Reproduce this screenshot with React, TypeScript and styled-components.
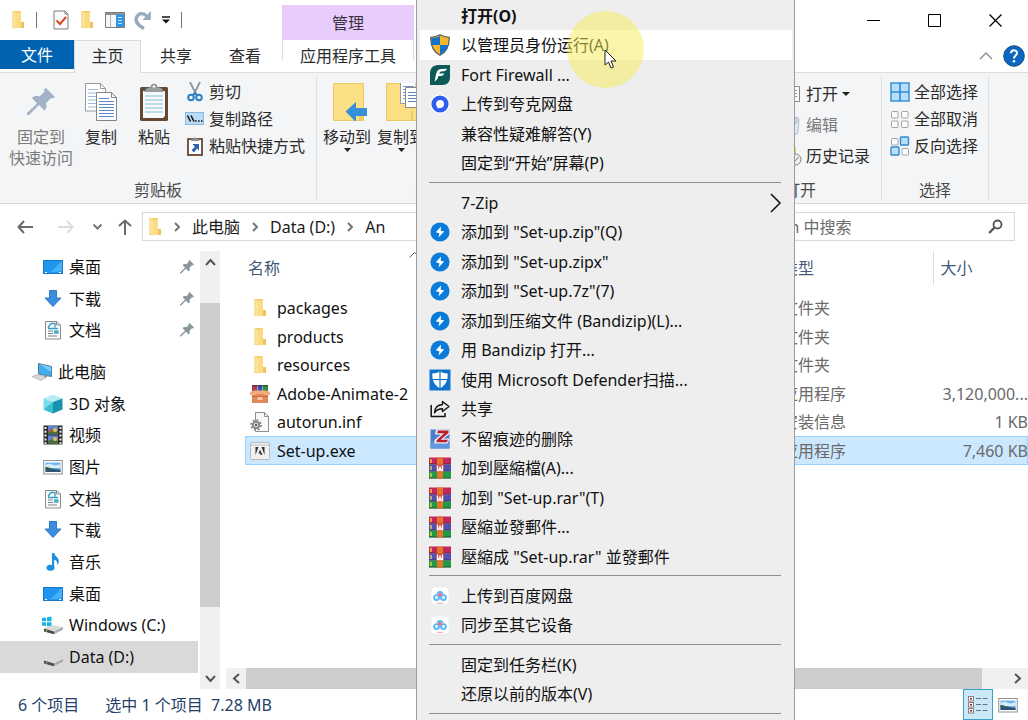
import React from "react";
import styled, { createGlobalStyle, css } from "styled-components";

const GlobalStyle = createGlobalStyle`
  *, *::before, *::after { box-sizing: border-box; }
  body { margin: 0; background: #fff; }
  body, button, input, table {
    font-family: "Noto Sans", "Noto Sans CJK SC", sans-serif;
    font-size: 16px;
    line-height: 20px;
  }
  button { border: 0; padding: 0; margin: 0; background: none; color: inherit; cursor: default; white-space: nowrap; }
  a { color: inherit; text-decoration: none; cursor: default; white-space: nowrap; }
  svg { display: block; flex: none; }
  ul { list-style: none; margin: 0; padding: 0; }
`;

/* ---------- icons ---------- */

const Folder = () => (
  <svg width="14" height="20" viewBox="0 0 14 20">
    <path d="M1 1h9v17H1z" fill="#f6cf6c" />
    <path d="M1 1l4 2v16l-4-2z" fill="#fbe29a" />
    <path d="M5 3h4l1-2v11h3v6H5z" fill="#fbdc84" />
    <path d="M10 12h3v6h-3z" fill="#efc35a" />
  </svg>
);

const CheckDoc = () => (
  <svg width="16" height="20" viewBox="0 0 16 20">
    <path d="M1 1h11l3 3v15H1z" fill="#fafafa" stroke="#7d7d7d" />
    <path d="M12 1v3h3" fill="none" stroke="#7d7d7d" />
    <path d="M3.500 10.500l3.500 3.500 6-7" fill="none" stroke="#d9481c" strokeWidth="2" />
  </svg>
);

const PaneWindow = () => (
  <svg width="20" height="16" viewBox="0 0 20 16">
    <path d="M.5.5h19v15H.5z" fill="#f6f6f6" stroke="#7c7c7c" />
    <path d="M1 1h18v2H1z" fill="#8d9298" />
    <path d="M5.500 3v12" stroke="#b5b5b5" />
    <path d="M11 2.500h8V15h-8z" fill="#2f96e6" />
    <path d="M13 5.500h4M13 8.500h4M13 11.500h4" stroke="#bfe2ff" />
  </svg>
);

const Redo = () => (
  <svg width="17" height="20" viewBox="0 0 17 20">
    <path d="M10 18.500C3 15 .5 10.500 3 6.500 5 3 9.500 2.500 12.500 6" fill="none" stroke="#9aa8bf" strokeWidth="3.400" />
    <path d="M16.800 1v9H8.500z" fill="#9aa8bf" />
  </svg>
);

const QuickDrop = () => (
  <svg width="8" height="8" viewBox="0 0 8 8">
    <path d="M0 1h8" stroke="#111" strokeWidth="1.500" />
    <path d="M0 3.500h8l-4 4z" fill="#111" />
  </svg>
);

const PinBig = () => (
  <svg width="28" height="28" viewBox="0 0 28 28">
    <path d="M19 0l9 9-2 1.500-2-.5-5 5c1 3 .5 5.500-1.500 7.500l-5.500-5.500L2 27H0v-2l10-9.500L5 10c2-2 4.500-2.500 7.500-1.500l5-5-.5-2z" fill="#a3b1c6" />
  </svg>
);

const CopyBig = () => (
  <svg width="32" height="38" viewBox="0 0 32 38">
    <path d="M.5.500h15l5 5V28H.5z" fill="#fdfdfd" stroke="#9a9a9a" />
    <path d="M15.500.5v5h5" fill="none" stroke="#9a9a9a" />
    <path d="M3 6.500h10M3 10h15M3 13.500h15M3 17h15M3 20.500h15M3 24h15" stroke="#9dbce0" />
    <path d="M11.500 9.500h15l5 5v23h-20z" fill="#fff" stroke="#848484" />
    <path d="M26.500 9.500v5h5" fill="none" stroke="#848484" />
    <path d="M14 15.500h10M14 18.500h15M14 21.500h15M14 24.500h15M14 27.500h15M14 30.500h15M14 33.500h15" stroke="#5b87c5" strokeWidth="1.200" />
  </svg>
);

const PasteBig = () => (
  <svg width="28" height="38" viewBox="0 0 28 38">
    <rect x="0" y="4" width="28" height="34" rx="1.500" fill="#664731" />
    <path d="M3 8h22v25l-2 2H3z" fill="#f6fafc" />
    <path d="M5 13h18M5 17h18M5 21h18M5 25h18M5 29h18" stroke="#a9cfe2" strokeWidth="1.500" />
    <path d="M5 8.500l1-3 5-1.500a3 3 0 0 1 6 0l5 1.500 1 3z" fill="#9a9fa3" stroke="#74797c" strokeWidth=".6" />
    <circle cx="14" cy="3.500" r="1.300" fill="#fff" />
  </svg>
);

const Scissors = () => (
  <svg width="16" height="20" viewBox="0 0 16 20">
    <path d="M3 0l6.500 13M13 0L6.500 13" stroke="#8c949c" strokeWidth="1.800" />
    <circle cx="4" cy="15.500" r="2.800" fill="none" stroke="#2b82c4" strokeWidth="2" />
    <circle cx="12" cy="15.500" r="2.800" fill="none" stroke="#2b82c4" strokeWidth="2" />
    <path d="M6 13l2-2 2 2" fill="none" stroke="#2b82c4" strokeWidth="2" />
  </svg>
);

const PathIcon = () => (
  <svg width="20" height="14" viewBox="0 0 20 14">
    <rect x=".5" y=".5" width="18" height="12" fill="#b9dcf4" stroke="#8db9d8" />
    <path d="M2.500 3.500l3 6M6 3.500l3 6" stroke="#111" strokeWidth="1.500" />
    <path d="M10 9h1.500M13 9h1.500M16 9h1.500" stroke="#111" strokeWidth="1.500" />
  </svg>
);

const PasteLink = () => (
  <svg width="16" height="20" viewBox="0 0 16 20">
    <rect x="1" y="3" width="14" height="16" fill="#fff" stroke="#664731" strokeWidth="1.800" />
    <path d="M4 5V3l2.500-.5a1.600 1.600 0 0 1 3 0L12 3v2z" fill="#8c9094" />
    <path d="M5.500 8H12v6.500l-2-2-3 4-2.500-2.500 3.500-3z" fill="#2c62ad" />
  </svg>
);

const MoveTo = () => (
  <svg width="40" height="38" viewBox="-6 0 40 38">
    <path d="M.5.500h30v37H.5z" fill="#fbdf85" stroke="#ecc862" />
    <path d="M26 30h4v7h-4z" fill="#f3ca5e" />
    <path d="M12.500 28.500L23 19v6h11v8H23v6z" fill="#3690d8" />
  </svg>
);

const CopyTo = () => (
  <svg width="40" height="38" viewBox="-5 0 40 38">
    <path d="M.5.500h30v37H.5z" fill="#fbdf85" stroke="#ecc862" />
    <path d="M26 28v9" stroke="#e3b84c" />
    <path d="M14.500-1.500H30v22H14.500z" fill="#fff" stroke="#999" />
    <path d="M17 3.500h11M17 6.500h11M17 9.500h11M17 12.500h11M17 15.500h11" stroke="#6d97cf" />
    <path d="M19.500 4.500H35v20H19.500z" fill="#fff" stroke="#888" />
    <path d="M22 9.500h12M22 12.500h12M22 15.500h12M22 18.500h12" stroke="#5b87c5" />
  </svg>
);

const DropArrow = ({ size = 7 }: { size?: number }) => (
  <svg width={size} height="4" viewBox="0 0 8 4" preserveAspectRatio="none">
    <path d="M0 0h8L4 4z" fill="#222" />
  </svg>
);

const PropsIcon = () => (
  <svg width="20" height="18" viewBox="0 0 20 18">
    <path d="M3.500 1.500h14v15h-14z" fill="#fafafa" stroke="#8a8a8a" />
    <path d="M6 5.500h9M6 8.500h9M6 11.500h9" stroke="#8a97a8" />
  </svg>
);

const EditIcon = () => (
  <svg width="20" height="20" viewBox="0 0 20 20">
    <path d="M4 6h13l-1.500 13H5z" fill="#e4eaf3" stroke="#b4c0d3" />
    <path d="M9 5l6-3 2 3-4 4z" fill="#ccd6e5" stroke="#a9b7cc" />
  </svg>
);

const HistoryIcon = () => (
  <svg width="20" height="20" viewBox="0 0 20 20">
    <path d="M1 1h13v16H1z" fill="#f2cd57" />
    <circle cx="13.500" cy="13.500" r="5.500" fill="#eee" stroke="#7d7d7d" />
    <path d="M10.500 13l2.500 2 3.500-4" fill="none" stroke="#777" />
  </svg>
);

const Cell = ({ x, y, on }: { x: number; y: number; on?: boolean }) => (
  <rect x={x} y={y} width={on ? 8 : 6.500} height={on ? 8 : 6.500} rx=".8" fill={on ? "#b8e0fb" : "#fbfbfb"} stroke={on ? "#2d8ad2" : "#a4a4a4"} strokeWidth={on ? 1.400 : 1} />
);
const SelectAllIcon = () => (
  <svg width="20" height="20" viewBox="0 0 20 20">
    <rect x="1" y="1" width="18" height="18" fill="#b8e0fb" stroke="#2d8ad2" strokeWidth="1.400" />
    <path d="M10 1v18M1 10h18" stroke="#2d8ad2" strokeWidth="1.600" />
  </svg>
);
const SelectNoneIcon = () => (
  <svg width="20" height="20" viewBox="0 0 20 20">
    <Cell x={1.500} y={2.500} /><Cell x={11.500} y={2.500} /><Cell x={1.500} y={12} /><Cell x={11.500} y={12} />
  </svg>
);
const InvertIcon = () => (
  <svg width="20" height="20" viewBox="0 0 20 20">
    <Cell x={1.500} y={2.500} /><Cell x={10.500} y={1} on /><Cell x={1} y={11} on /><Cell x={12} y={12.500} />
  </svg>
);

type StrokeProps = { w: number; h: number; d: string; color?: string; weight?: number };
const Stroke = ({ w, h, d, color = "#555", weight = 2 }: StrokeProps) => (
  <svg width={w} height={h} viewBox={`0 0 ${w} ${h}`}>
    <path d={d} fill="none" stroke={color} strokeWidth={weight} />
  </svg>
);

const Help = () => (
  <svg width="22" height="22" viewBox="0 0 22 22">
    <circle cx="11" cy="11" r="10.300" fill="#0b66c0" stroke="#1f4f86" />
    <path d="M8 8.200c.2-4 6.500-3.600 6 .2-.3 2-3 2.300-3 5" fill="none" stroke="#fff" strokeWidth="2" />
    <circle cx="11" cy="16.200" r="1.300" fill="#fff" />
  </svg>
);

const SearchGlyph = () => (
  <svg width="16" height="16" viewBox="0 0 16 16">
    <circle cx="9.500" cy="5.500" r="4" fill="none" stroke="#555" strokeWidth="1.800" />
    <path d="M6.500 8.500L1.200 14" stroke="#555" strokeWidth="2.400" />
  </svg>
);

const PinSmall = () => (
  <svg width="14" height="14" viewBox="0 0 28 28">
    <path d="M19 0l9 9-2 2-2-.5-5 5c1 3 .5 5.500-1.500 7.500l-5.500-5.500L2 27H0v-2l10-9.500L5 10c2-2 4.500-2.500 7.500-1.500l5-5-.5-2z" fill="#8b979f" />
  </svg>
);

const Desktop = () => (
  <svg width="20" height="20" viewBox="0 0 20 20">
    <rect x=".5" y="3.500" width="19" height="13" fill="#1f96ee" stroke="#1779c8" />
    <path d="M19 4v10L7 15.500z" fill="#45b0f7" />
    <path d="M2 15.500h2M16 15.500h2" stroke="#fff" />
  </svg>
);
const Download = () => (
  <svg width="20" height="20" viewBox="0 0 20 20">
    <path d="M6.500 1.500h7V9H18l-8 8.500L2 9h4.500z" fill="#3a8ee0" stroke="#2e78c4" />
  </svg>
);
const DocIcon = () => (
  <svg width="20" height="20" viewBox="0 0 20 20">
    <path d="M2.500 1.500h11l4 3.500v14h-15z" fill="#fcfcfc" stroke="#8b8b8b" />
    <path d="M13.500 1.500V5h4" fill="none" stroke="#8b8b8b" />
    <path d="M5 7.500l3-4 4 0v4M5 8.500h10" stroke="#2f9fc4" strokeWidth="1.300" fill="none" />
    <path d="M5 11h5M5 13.500h5M5 16h9M11.500 11h4M11.500 13h4" stroke="#70818d" />
    <path d="M11 10.500h4.500v3H11z" fill="#4aaed0" />
  </svg>
);
const ThisPC = () => (
  <svg width="22" height="20" viewBox="0 0 22 20">
    <path d="M7.500 1.500l13 3v10l-13-2.500z" fill="#41acec" stroke="#4f7d9c" />
    <path d="M8 2l12 8V5z" fill="#7dcaf6" />
    <path d="M1 14.500l6-2 9 2.500-6 3.500z" fill="#d5d9dc" stroke="#a9aeb2" strokeWidth=".7" />
    <path d="M13 13l3 .5v2l-3-1z" fill="#8c959c" />
  </svg>
);
const Cube = () => (
  <svg width="20" height="20" viewBox="0 0 20 20">
    <path d="M10 .5l9.500 4L10 8 .5 4.500z" fill="#b6edf3" />
    <path d="M.5 4.500L10 8v11.500l-9.500-4z" fill="#7cdbe6" />
    <path d="M19.500 4.500L10 8v11.500l9.500-4z" fill="#1793ae" />
    <path d="M.5 15.500L10 8v11.500z" fill="#3dbdd0" />
  </svg>
);
const Film = () => (
  <svg width="20" height="20" viewBox="0 0 20 20">
    <path d="M.5.500h19v19H.5z" fill="#2b2b2b" />
    <path d="M5 1h10v8.500H5zM5 10.500h10V19H5z" fill="#5f82d0" />
    <path d="M5 6l4-2 2 3 4-1v3.500H5zM5 16l5-2 5 2v3H5z" fill="#4a6b3c" />
    <circle cx="12" cy="5" r="2" fill="#e7c140" /><circle cx="7.500" cy="5.500" r="1.500" fill="#cf4d63" /><circle cx="12" cy="14" r="2" fill="#e7c140" />
    <path d="M2.500 2v17M17.500 2v17" stroke="#f2f2f2" strokeWidth="2" strokeDasharray="2 1.800" />
  </svg>
);
const Picture = () => (
  <svg width="20" height="20" viewBox="0 0 20 20">
    <rect x=".75" y="3.500" width="18.500" height="13.500" fill="#fff" stroke="#909090" />
    <path d="M2.500 5.500h15V15h-15z" fill="#6fb6ea" />
    <path d="M2.500 8c4-2.500 6-1 8 0s5 0 7-1v4h-15z" fill="#d6ecf8" />
    <path d="M2.500 10.500c5 0 8 2 15 2V15h-15z" fill="#31557a" />
    <path d="M2.500 10c3 0 5 1.500 8 2.500h-8z" fill="#2f6446" />
  </svg>
);
const Music = () => (
  <svg width="20" height="20" viewBox="0 0 20 20">
    <ellipse cx="7.500" cy="15.800" rx="4" ry="3" fill="#1d8fe0" />
    <path d="M9 1h2.200c.3 3 4.800 4.500 4.600 8.500 0 1.500-.8 2.500-1.600 3.500.5-3.500-1-4.500-3-5.200V16H9z" fill="#1d8fe0" />
  </svg>
);
const Drive = ({ win }: { win?: boolean }) => (
  <svg width="22" height="20" viewBox="0 0 22 20">
    {win && <path d="M0 3l4-.6v3.900H0zM5 2.200l4.500-.7v4.800H5zM0 7.200h4V11l-4-.6zM5 7.200h4.500v4.500L5 11z" fill="#16b3e8" />}
    <path d="M2 13.500l8-3.500 11 2-9 4.500z" fill="#dadada" />
    <path d="M2 13.500l10 3v2.800L2 16.500z" fill="#4a4d4c" />
    <path d="M12 16.500l9-4.500v2.500l-9 4.800z" fill="#a7a9aa" />
    <circle cx="4.500" cy="15.700" r=".8" fill="#8de05e" />
  </svg>
);

const WinRarBox = () => (
  <svg width="20" height="20" viewBox="0 0 20 20">
    <path d="M2 1h5v8H2z" fill="#b33652" /><path d="M7.500 1h5v8h-5z" fill="#3552b5" /><path d="M13 1h5v8h-5z" fill="#2f8f45" />
    <path d="M2 1h16v1.500H2z" fill="#222" opacity=".45" />
    <path d="M2 8h16v11H2z" fill="#e08a5b" />
    <path d="M0 8l4-1.500h12L20 8v3h-5l-2-1H7l-2 1H0z" fill="#f3ad7c" />
    <path d="M2 12h16v1H2z" fill="#c96d40" />
    <path d="M7.500 13h5v3h-5z" fill="#f6c9a4" />
  </svg>
);
const InfFile = () => (
  <svg width="20" height="20" viewBox="0 0 20 20">
    <path d="M5.500.500h9l4 4v15h-13z" fill="#f8f8f8" stroke="#8e8e8e" />
    <path d="M14.500.5v4h4" fill="none" stroke="#8e8e8e" />
    <circle cx="6" cy="13" r="3.200" fill="#dfe3e5" stroke="#7b858b" strokeWidth="1.800" />
    <circle cx="6" cy="13" r="5" fill="none" stroke="#7b858b" strokeWidth="1.600" strokeDasharray="2 1.900" />
    <circle cx="6" cy="13" r="1.200" fill="#555" />
  </svg>
);
const AdobeFile = () => (
  <svg width="20" height="18" viewBox="0 0 20 18">
    <rect x=".5" y=".5" width="19" height="17" rx="1.500" fill="#f1f1f1" stroke="#b9b9b9" />
    <path d="M1 2h18v2H1z" fill="#d9d9d9" />
    <path d="M5.500 5h3L5.500 13zM11.500 5h3v8z" fill="#333" />
    <path d="M10 7.500l2.500 5.500h-1.700l-.7-1.600H8.500z" fill="#333" />
  </svg>
);

const Shield = () => (
  <svg width="20" height="22" viewBox="0 0 20 22">
    <path d="M10 .8c3 1.700 6 2.400 9.200 2.500.3 8-2 14.500-9.200 18C2.800 17.800.5 11.300.8 3.300 4 3.200 7 2.500 10 .8z" fill="#f7b62d" stroke="#4f5b66" strokeWidth="1.200" />
    <path d="M10 2v9H1.800c-.5-2.400-.5-4.500-.4-7C4.600 4 7.300 3.400 10 2z" fill="#1473c8" />
    <path d="M10 11h8.200c-1.100 4.200-3.700 7.300-8.200 9.600z" fill="#1473c8" />
  </svg>
);
const Fort = () => (
  <svg width="22" height="22" viewBox="0 0 22 22">
    <path d="M9 1h12v12.500c0 4.500-3 7.500-7.500 7.500H1V9.500C1 4.500 4 1 9 1z" fill="#0c5a58" />
    <path d="M18 4.800c-1 2-2.500 2.500-4.500 2.500-2 0-2.800.7-3.300 2.200h5c-.8 1.800-2 2.500-3.700 2.500H9.500c-.5 2.500-1.800 4.500-4 5.500 1-3 .8-5 1.700-8 .9-3.200 2.600-4.500 5.600-4.500z" fill="#fff" />
  </svg>
);
const Quark = () => (
  <svg width="20" height="20" viewBox="0 0 20 20">
    <circle cx="10" cy="10" r="9.700" fill="#fff" />
    <circle cx="10" cy="10" r="8.600" fill="#2c5ff0" />
    <path d="M10 6a4 4 0 1 1 0 8c-1 0-1.500.5-2.500.3.300-.7-.2-1-.7-1.800A4 4 0 0 1 10 6z" fill="#fff" />
  </svg>
);
const Bandizip = () => (
  <svg width="20" height="20" viewBox="0 0 20 20">
    <circle cx="10" cy="10" r="9.600" fill="#0a7bd9" />
    <path d="M11 4.500L5.800 10.200l3.600 1L8.500 15.500l5.700-5.900-3.500-.9z" fill="#fff" />
  </svg>
);
const Defender = () => (
  <svg width="22" height="22" viewBox="0 0 22 22">
    <path d="M.5.500h21v21H.5z" fill="#0f72cb" />
    <path d="M11 2.500c2.300 1.300 4.800 1.800 7.700 1.900.3 6.300-1.700 11.700-7.700 14.800-6-3.100-8-8.500-7.700-14.800 2.900-.1 5.400-.6 7.700-1.900z" fill="#fff" />
    <path d="M11 2v18M3 10.500h16" stroke="#0f72cb" strokeWidth="1.200" />
  </svg>
);
const Share = () => (
  <svg width="20" height="20" viewBox="0 0 20 20">
    <path d="M1.200 6v11.500H15V14" fill="none" stroke="#111" strokeWidth="1.500" />
    <path d="M12.500 2.500L19 7.500l-6.500 5V9.800c-4 0-6 1.200-8 4 .3-4.500 3-8 8-8.300z" fill="none" stroke="#111" strokeWidth="1.400" strokeLinejoin="round" />
  </svg>
);
const ZDelete = () => (
  <svg width="20" height="20" viewBox="0 0 20 20">
    <path d="M.5.500h19v19H.5z" fill="#4a80cb" />
    <path d="M.5 14l8-5 11 5v5.500H.5z" fill="#5f98dd" />
    <path d="M6 .5h13.500v4.500L13.500 9.500h6L17.500 14.500H4.500v-3.500L11 5.500H5z" fill="#f3ecef" />
    <path d="M8 1.500h10.500v2.500L10.500 10.800h7.500l-1.200 2.400H6.500v-1.700L14 4.300H7z" fill="#b5202f" />
  </svg>
);
const WinRar = () => (
  <svg width="22" height="22" viewBox="0 0 22 22">
    <path d="M0 .5h22v7H0z" fill="#c4285a" /><path d="M0 7.500h22v7H0z" fill="#5350b0" /><path d="M0 14.500h22v7H0z" fill="#1f9a45" />
    <path d="M0 7h22M0 14h22M0 21h22" stroke="#2c1630" strokeWidth=".9" opacity=".6" />
    <path d="M2 2v4M2 9v4M2 16v4" stroke="#f3d242" strokeWidth="1.400" />
    <path d="M8 .5h6v21H8z" fill="#e5742a" />
    <path d="M7.500 7.500h7v7h-7z" fill="#d4402f" />
    <path d="M8.500 8.500v5h1.500l1-3 1 3h1.500v-5" fill="none" stroke="#fff" strokeWidth="1.400" />
  </svg>
);
const Baidu = () => (
  <svg width="18" height="18" viewBox="0 0 18 18">
    <rect x=".5" y=".5" width="17" height="17" rx="3" fill="#fff" />
    <circle cx="5.600" cy="10.600" r="2.600" fill="#d9f1ff" stroke="#52b4f3" strokeWidth="1.700" />
    <circle cx="12.400" cy="10.600" r="2.600" fill="#d9f1ff" stroke="#52b4f3" strokeWidth="1.700" />
    <path d="M6.200 7a2.900 2.900 0 0 1 5.600 0" fill="none" stroke="#52b4f3" strokeWidth="1.700" />
    <path d="M7.200 9L9 6.800 10.800 9" fill="none" stroke="#ee5a6b" strokeWidth="1.700" />
    <path d="M6 16.300h6" stroke="#f3a3ad" />
  </svg>
);
const DetailsView = () => (
  <svg width="20" height="18" viewBox="0 0 20 18">
    {[0.5, 6.500, 12.500].map((y) => (
      <g key={y}>
        <rect x=".5" y={y} width="5" height="4.500" fill="#fff" stroke="#8c7e7e" />
        <circle cx="3" cy={y + 2.300} r="1" fill="#6b1d1d" />
        <path d={`M8 ${y + 2}h5M14.500 ${y + 2}h5`} stroke="#5d7784" strokeWidth="1.200" />
      </g>
    ))}
  </svg>
);

/* ---------- window frame ---------- */

const Window = styled.div`
  position: relative;
  display: flex;
  flex-direction: column;
  height: 100vh;
  min-height: 640px;
  overflow: hidden;
  background: #fff;
  color: #1a1a1a;
`;
const TitleBar = styled.header`
  display: flex;
  align-items: center;
  height: 40px;
  flex: none;
`;
const QuickAccess = styled.div`
  display: flex;
  align-items: center;
  width: 282px;
  padding-left: 11px;
  gap: 11px;
  button { display: flex; }
`;
const QuickHistory = styled.div`
  display: flex;
  align-items: center;
  gap: 11px;
  margin-left: -2px;
`;
const Tick = styled.span`
  width: 1px;
  height: 16px;
  background: #777;
  margin-right: 5px;
`;
const ContextTitle = styled.div`
  align-self: flex-end;
  width: 132px;
  height: 35px;
  line-height: 36px;
  text-align: center;
  background: #e8ccfb;
  color: #3b3244;
`;
const WindowButtons = styled.div`
  display: flex;
  margin-left: auto;
  padding-right: 2px;
`;
const WindowButton = styled.button`
  display: flex;
  align-items: center;
  justify-content: center;
  width: 61px;
  height: 40px;
`;

const TabRow = styled.nav`
  display: flex;
  height: 33px;
  flex: none;
  border-bottom: 1px solid #dadbdc;
`;
const Tab = styled.button<{ $w: number; $kind?: "file" | "active" | "context" }>`
  width: ${(p) => p.$w}px;
  height: 33px;
  padding-bottom: 2px;
  color: #2b2b2b;
  ${(p) => p.$kind === "file" && css`height: 29px; padding: 0; background: #0063b1; color: #fff;`}
  ${(p) => p.$kind === "active" && css`background: #f5f6f7; border: 1px solid #dadbdc; border-bottom: 0;`}
  ${(p) => p.$kind === "context" && css`
    margin-left: 3px; height: 20px; padding-top: 12px; line-height: 8px;
    border-left: 1px solid #dcdcdc; border-right: 1px solid #dcdcdc;
  `}
`;
const TabTools = styled.div`
  display: flex;
  align-items: center;
  gap: 10px;
  margin-left: auto;
  padding-right: 3px;
  button { display: flex; }
`;

const Ribbon = styled.section`
  display: flex;
  height: 131px;
  flex: none;
  padding: 3px 0;
  background: #f4f5f7;
  border-bottom: 1px solid #d9dadb;
`;
const Group = styled.div<{ $w: number; $open?: boolean }>`
  display: flex;
  flex-direction: column;
  flex: none;
  width: ${(p) => p.$w}px;
  border-right: 1px solid ${(p) => (p.$open ? "transparent" : "#dfe0e1")};
`;
const GroupBody = styled.div<{ $pad?: number; $end?: boolean }>`
  display: flex;
  flex: 1;
  padding-left: ${(p) => p.$pad ?? 0}px;
  padding-top: 2px;
  justify-content: ${(p) => (p.$end ? "flex-end" : "flex-start")};
`;
const GroupLabel = styled.div`
  height: 20px;
  text-align: center;
  color: #4a4a4a;
`;
const Spacer = styled.div`
  flex: 1;
`;
const BigButton = styled.button<{ $w: number; $dim?: boolean }>`
  display: flex;
  flex-direction: column;
  align-items: center;
  width: ${(p) => p.$w}px;
  padding-top: 4px;
  line-height: 21px;
  color: ${(p) => (p.$dim ? "#7b7b7b" : "#2b2b2b")};
`;
const BigIcon = styled.span`
  display: flex;
  align-items: center;
  height: 40px;
  margin-bottom: 5px;
`;
const SmallStack = styled.div<{ $left?: number; $right?: number }>`
  display: flex;
  flex-direction: column;
  margin-left: ${(p) => p.$left ?? 0}px;
  margin-right: ${(p) => p.$right ?? 0}px;
`;
const SmallButton = styled.button<{ $h: number; $dim?: boolean }>`
  display: flex;
  align-items: center;
  gap: 4px;
  height: ${(p) => p.$h}px;
  color: ${(p) => (p.$dim ? "#7b7b7b" : "#2b2b2b")};
`;
const IconBox = styled.span<{ $w?: number }>`
  display: flex;
  align-items: center;
  justify-content: center;
  flex: none;
  width: ${(p) => p.$w ?? 20}px;
`;

/* ---------- address row ---------- */

const AddressRow = styled.div`
  display: flex;
  align-items: center;
  height: 47px;
  flex: none;
  padding: 0 13px 2px 0;
`;
const NavButton = styled.button<{ $w: number }>`
  display: flex;
  justify-content: center;
  width: ${(p) => p.$w}px;
`;
const Crumbs = styled.div`
  display: flex;
  align-items: center;
  flex: 1;
  height: 29px;
  margin-left: 6px;
  padding-left: 5px;
  gap: 12px;
  border: 1px solid #d9d9d9;
`;
const SearchBox = styled.label`
  display: flex;
  align-items: center;
  width: 267px;
  height: 29px;
  margin-left: 12px;
  padding: 0 10px;
  border: 1px solid #d9d9d9;
  input {
    flex: 1;
    min-width: 0;
    padding: 0;
    border: 0;
    outline: 0;
    background: none;
  }
  input::placeholder { color: #6b6b6b; opacity: 1; }
`;

/* ---------- body ---------- */

const Body = styled.div`
  display: flex;
  flex: 1;
  min-height: 0;
`;
const Tree = styled.nav`
  display: flex;
  flex-direction: column;
  width: 198px;
  flex: none;
  padding-bottom: 16px;
`;
const TreeList = styled.ul`
  display: flex;
  flex-direction: column;
  min-height: 0;
  height: 100%;
`;
const TreeRow = styled.li<{ $root?: boolean; $on?: boolean }>`
  flex: 0 1 32px;
  min-height: 24px;
  margin-top: ${(p) => (p.$root ? 10 : 0)}px;
  background: ${(p) => (p.$on ? "#d9d9d9" : "transparent")};
  a {
    display: flex;
    align-items: center;
    height: 100%;
    gap: 6px;
    padding: 0 4px 0 ${(p) => (p.$root ? 32 : 43)}px;
    color: #111;
  }
  span:last-of-type { flex: 1; }
`;
const VScroll = styled.div`
  display: flex;
  flex-direction: column;
  width: 20px;
  flex: none;
  margin: 0 6px 0 2px;
  background: #f0f0f0;
`;
const ScrollButton = styled.button`
  display: flex;
  align-items: center;
  justify-content: center;
  width: 20px;
  height: 21px;
  flex: none;
`;
const VTrack = styled.div`
  flex: 1;
  padding: 31px 0 61px;
`;
const Thumb = styled.div`
  height: 100%;
  background: #cdcdcd;
`;
const Pane = styled.main`
  display: flex;
  flex-direction: column;
  flex: 1;
  min-width: 0;
`;
const FileArea = styled.div`
  flex: 1;
  min-height: 0;
  padding-left: 19px;
  overflow: hidden;
`;
const FileTable = styled.table`
  width: 100%;
  table-layout: fixed;
  border-collapse: collapse;
  white-space: nowrap;
  th, td { padding: 0; text-align: left; font-weight: 400; }
  th { height: 34px; color: #44597a; }
  th:nth-child(1) { width: 336px; }
  th:nth-child(3) { width: 151px; }
  th:nth-child(4) { width: 95px; border-left: 1px solid #dedede; padding-left: 7px; }
  td:nth-child(3) { color: #6a6a6a; }
  td:nth-child(4) { color: #6a6a6a; text-align: right; overflow: hidden; }
  tbody::before { content: ""; display: block; height: 9px; }
`;
const NameHead = styled.span`
  display: grid;
  grid-template-columns: 1fr auto 1fr;
  height: 34px;
  line-height: 34px;
  padding-left: 3px;
  svg { margin-top: 1px; }
`;
const FileRow = styled.tr<{ $on?: boolean }>`
  height: 28px;
  &:nth-child(even) { height: 29px; }
  ${(p) => p.$on && css`
    background: #cce8ff;
    box-shadow: inset 0 0 0 1px #99d1ff;
  `}
`;
const FileName = styled.span`
  display: flex;
  align-items: center;
  gap: 7px;
  height: 20px;
  padding-left: 5px;
  color: #111;
`;
const HScroll = styled.div`
  display: flex;
  height: 21px;
  flex: none;
  background: #f0f0f0;
`;
const HTrack = styled.div`
  flex: 1;
  padding-right: 26px;
`;

const StatusBar = styled.footer`
  display: flex;
  align-items: center;
  height: 31px;
  flex: none;
  padding: 0 5px 0 18px;
  color: #263f6a;
`;
const StatusText = styled.span`
  margin-right: 26px;
  white-space: pre;
`;
const ViewButton = styled.button<{ $on?: boolean }>`
  display: flex;
  align-items: center;
  justify-content: center;
  width: 30px;
  height: 31px;
  ${(p) => p.$on && css`background: #cbe8f6; border: 1px solid #3f9fcb;`}
`;

/* ---------- context menu ---------- */

const Menu = styled.div`
  position: absolute;
  top: 0;
  bottom: 0;
  left: 416px;
  width: 379px;
  padding: 1px 2px 0 3px;
  background: #eee;
  border: solid #9c9c9c;
  border-width: 0 1px;
  overflow: hidden;
`;
const MenuGroup = styled.div`
  display: flex;
  flex-direction: column;
  & + &::before {
    content: "";
    height: 10px;
    margin: 0 11px 0 9px;
    background: linear-gradient(#919191, #919191) 0 4px / 100% 1px no-repeat;
  }
`;
const MenuItem = styled.button<{ $hot?: boolean; $bold?: boolean }>`
  display: flex;
  align-items: center;
  gap: 10px;
  height: 29px;
  padding: 0 10px 0 9px;
  color: #111;
  text-align: left;
  font-weight: ${(p) => (p.$bold ? 700 : 400)};
  background: ${(p) => (p.$hot ? "#fff" : "transparent")};
  &:nth-child(even) { height: 30px; }
  & > span:nth-child(2) { flex: 1; }
`;
const Halo = styled.div`
  position: absolute;
  top: 11px;
  left: 567px;
  width: 77px;
  height: 77px;
  border-radius: 50%;
  background: rgba(246, 236, 84, 0.5);
  pointer-events: none;
`;
const Pointer = styled.div`
  position: absolute;
  top: 49px;
  left: 604px;
  pointer-events: none;
`;

type Entry = { icon?: React.ReactNode; label: string; hot?: boolean; bold?: boolean; sub?: boolean };

const menu: Entry[][] = [
  [
    { label: "打开(O)", bold: true },
    { icon: <Shield />, label: "以管理员身份运行(A)", hot: true },
    { icon: <Fort />, label: "Fort Firewall ..." },
    { icon: <Quark />, label: "上传到夸克网盘" },
    { label: "兼容性疑难解答(Y)" },
    { label: "固定到“开始”屏幕(P)" },
  ],
  [
    { label: "7-Zip", sub: true },
    { icon: <Bandizip />, label: '添加到 "Set-up.zip"(Q)' },
    { icon: <Bandizip />, label: '添加到 "Set-up.zipx"' },
    { icon: <Bandizip />, label: '添加到 "Set-up.7z"(7)' },
    { icon: <Bandizip />, label: "添加到压缩文件 (Bandizip)(L)..." },
    { icon: <Bandizip />, label: "用 Bandizip 打开..." },
    { icon: <Defender />, label: "使用 Microsoft Defender扫描..." },
    { icon: <Share />, label: "共享" },
    { icon: <ZDelete />, label: "不留痕迹的删除" },
    { icon: <WinRar />, label: "加到壓縮檔(A)..." },
    { icon: <WinRar />, label: '加到 "Set-up.rar"(T)' },
    { icon: <WinRar />, label: "壓縮並發郵件..." },
    { icon: <WinRar />, label: '壓縮成 "Set-up.rar" 並發郵件' },
  ],
  [
    { icon: <Baidu />, label: "上传到百度网盘" },
    { icon: <Baidu />, label: "同步至其它设备" },
  ],
  [{ label: "固定到任务栏(K)" }, { label: "还原以前的版本(V)" }],
  [],
];

const tree: { icon: React.ReactNode; label: string; pin?: boolean; root?: boolean; on?: boolean }[] = [
  { icon: <Desktop />, label: "桌面", pin: true },
  { icon: <Download />, label: "下载", pin: true },
  { icon: <DocIcon />, label: "文档", pin: true },
  { icon: <ThisPC />, label: "此电脑", root: true },
  { icon: <Cube />, label: "3D 对象" },
  { icon: <Film />, label: "视频" },
  { icon: <Picture />, label: "图片" },
  { icon: <DocIcon />, label: "文档" },
  { icon: <Download />, label: "下载" },
  { icon: <Music />, label: "音乐" },
  { icon: <Desktop />, label: "桌面" },
  { icon: <Drive win />, label: "Windows (C:)" },
  { icon: <Drive />, label: "Data (D:)", on: true },
];

const files: { icon: React.ReactNode; name: string; type: string; size: string; on?: boolean }[] = [
  { icon: <Folder />, name: "packages", type: "文件夹", size: "" },
  { icon: <Folder />, name: "products", type: "文件夹", size: "" },
  { icon: <Folder />, name: "resources", type: "文件夹", size: "" },
  { icon: <WinRarBox />, name: "Adobe-Animate-2", type: "应用程序", size: "3,120,000..." },
  { icon: <InfFile />, name: "autorun.inf", type: "安装信息", size: "1 KB" },
  { icon: <AdobeFile />, name: "Set-up.exe", type: "应用程序", size: "7,460 KB", on: true },
];

const CrumbArrow = () => <Stroke w={6} h={10} d="M1 1l4 4-4 4" color="#777" weight={2} />;

export default function App() {
  return (
    <Window>
      <GlobalStyle />
      <TitleBar>
        <QuickAccess>
          <Folder />
          <Tick />
          <button aria-label="属性"><CheckDoc /></button>
          <button aria-label="新建文件夹"><Folder /></button>
          <button aria-label="窗格"><PaneWindow /></button>
          <QuickHistory>
            <button aria-label="恢复"><Redo /></button>
            <button aria-label="自定义快速访问工具栏"><QuickDrop /></button>
          </QuickHistory>
          <Tick />
        </QuickAccess>
        <ContextTitle>管理</ContextTitle>
        <WindowButtons>
          <WindowButton aria-label="最小化"><Stroke w={13} h={13} d="M0 6.500h13" color="#000" weight={1} /></WindowButton>
          <WindowButton aria-label="最大化"><Stroke w={13} h={13} d="M.5.500h12v12H.5z" color="#000" weight={1} /></WindowButton>
          <WindowButton aria-label="关闭"><Stroke w={13} h={13} d="M.5.500l12 12M12.500.500l-12 12" color="#000" weight={1.300} /></WindowButton>
        </WindowButtons>
      </TitleBar>

      <TabRow>
        <Tab $w={74} $kind="file">文件</Tab>
        <Tab $w={67} $kind="active">主页</Tab>
        <Tab $w={70}>共享</Tab>
        <Tab $w={68}>查看</Tab>
        <Tab $w={132} $kind="context">应用程序工具</Tab>
        <TabTools>
          <button aria-label="折叠功能区"><Stroke w={14} h={8} d="M1 7l6-6 6 6" color="#8b8b8b" weight={1.300} /></button>
          <button aria-label="帮助"><Help /></button>
        </TabTools>
      </TabRow>

      <Ribbon>
        <Group $w={317}>
          <GroupBody $pad={6}>
            <BigButton $w={70} $dim>
              <BigIcon><PinBig /></BigIcon>
              <span>固定到<br />快速访问</span>
            </BigButton>
            <BigButton $w={50}><BigIcon><CopyBig /></BigIcon>复制</BigButton>
            <BigButton $w={56}><BigIcon><PasteBig /></BigIcon>粘贴</BigButton>
            <SmallStack $left={3}>
              <SmallButton $h={27}><IconBox><Scissors /></IconBox>剪切</SmallButton>
              <SmallButton $h={27}><IconBox><PathIcon /></IconBox>复制路径</SmallButton>
              <SmallButton $h={27}><IconBox><PasteLink /></IconBox>粘贴快捷方式</SmallButton>
            </SmallStack>
          </GroupBody>
          <GroupLabel>剪贴板</GroupLabel>
        </Group>
        <Group $w={230} $open>
          <GroupBody $pad={3}>
            <BigButton $w={54}><BigIcon><MoveTo /></BigIcon>移动到<DropArrow /></BigButton>
            <BigButton $w={54}><BigIcon><CopyTo /></BigIcon>复制到<DropArrow /></BigButton>
          </GroupBody>
          <GroupLabel>组织</GroupLabel>
        </Group>
        <Spacer />
        <Group $w={163}>
          <GroupBody $end>
            <SmallStack $right={11}>
              <SmallButton $h={31}><IconBox><PropsIcon /></IconBox>打开<DropArrow size={8} /></SmallButton>
              <SmallButton $h={31} $dim><IconBox><EditIcon /></IconBox>编辑</SmallButton>
              <SmallButton $h={31}><IconBox><HistoryIcon /></IconBox>历史记录</SmallButton>
            </SmallStack>
          </GroupBody>
          <GroupLabel>打开</GroupLabel>
        </Group>
        <Group $w={107}>
          <GroupBody $pad={8}>
            <SmallStack>
              <SmallButton $h={27}><IconBox><SelectAllIcon /></IconBox>全部选择</SmallButton>
              <SmallButton $h={27}><IconBox><SelectNoneIcon /></IconBox>全部取消</SmallButton>
              <SmallButton $h={27}><IconBox><InvertIcon /></IconBox>反向选择</SmallButton>
            </SmallStack>
          </GroupBody>
          <GroupLabel>选择</GroupLabel>
        </Group>
        <Group $w={39} $open />
      </Ribbon>

      <AddressRow>
        <NavButton $w={50} aria-label="后退"><Stroke w={16} h={14} d="M7 1L1.500 7 7 13M1.500 7H16" color="#6a6a6a" /></NavButton>
        <NavButton $w={32} aria-label="前进"><Stroke w={16} h={14} d="M9 1l5.500 6L9 13M14.500 7H0" color="#dcdcdc" /></NavButton>
        <NavButton $w={31} aria-label="最近位置"><Stroke w={9} h={6} d="M.5.500l4 4 4-4" color="#777" /></NavButton>
        <NavButton $w={23} aria-label="上移"><Stroke w={14} h={16} d="M1 7l6-5.500L13 7M7 1.500V16" color="#6a6a6a" /></NavButton>
        <Crumbs>
          <Folder />
          <CrumbArrow />
          <a href="#pc">此电脑</a>
          <CrumbArrow />
          <a href="#data">Data (D:)</a>
          <CrumbArrow />
          <a href="#an">An</a>
        </Crumbs>
        <SearchBox>
          <input aria-label="搜索" placeholder="在 An 中搜索" />
          <SearchGlyph />
        </SearchBox>
      </AddressRow>

      <Body>
        <Tree>
          <TreeList>
            {tree.map((t, i) => (
              <TreeRow key={i} $root={t.root} $on={t.on}>
                <a href="#folder">
                  <IconBox>{t.icon}</IconBox>
                  <span>{t.label}</span>
                  {t.pin && <PinSmall />}
                </a>
              </TreeRow>
            ))}
          </TreeList>
        </Tree>
        <VScroll>
          <ScrollButton aria-label="向上滚动"><Stroke w={11} h={8} d="M1 7l4.500-5L10 7" /></ScrollButton>
          <VTrack><Thumb /></VTrack>
          <ScrollButton aria-label="向下滚动"><Stroke w={11} h={8} d="M1 1l4.500 5L10 1" /></ScrollButton>
        </VScroll>
        <Pane>
          <FileArea>
            <FileTable>
              <thead>
                <tr>
                  <th><NameHead>名称<Stroke w={11} h={6} d="M.5 5.500l5-5 5 5" color="#666" weight={1} /></NameHead></th>
                  <th />
                  <th>类型</th>
                  <th>大小</th>
                </tr>
              </thead>
              <tbody>
                {files.map((f) => (
                  <FileRow key={f.name} $on={f.on}>
                    <td><FileName><IconBox>{f.icon}</IconBox>{f.name}</FileName></td>
                    <td />
                    <td>{f.type}</td>
                    <td>{f.size}</td>
                  </FileRow>
                ))}
              </tbody>
            </FileTable>
          </FileArea>
          <HScroll>
            <ScrollButton aria-label="向左滚动"><Stroke w={8} h={11} d="M7 1L2 5.500 7 10" /></ScrollButton>
            <HTrack><Thumb /></HTrack>
            <ScrollButton aria-label="向右滚动"><Stroke w={8} h={11} d="M1 1l5 4.500L1 10" /></ScrollButton>
          </HScroll>
        </Pane>
      </Body>

      <StatusBar>
        <StatusText>6 个项目</StatusText>
        <StatusText>选中 1 个项目  7.28 MB</StatusText>
        <Spacer />
        <ViewButton $on aria-label="详细信息"><DetailsView /></ViewButton>
        <ViewButton aria-label="缩略图"><Picture /></ViewButton>
      </StatusBar>

      <Menu role="menu">
        {menu.map((group, g) => (
          <MenuGroup key={g}>
            {group.map((m) => (
              <MenuItem key={m.label} role="menuitem" $hot={m.hot} $bold={m.bold}>
                <IconBox $w={22}>{m.icon}</IconBox>
                <span>{m.label}</span>
                {m.sub && <Stroke w={12} h={20} d="M1 1l9 9-9 9" color="#111" weight={1.500} />}
              </MenuItem>
            ))}
          </MenuGroup>
        ))}
      </Menu>
      <Halo />
      <Pointer>
        <svg width="14" height="20" viewBox="0 0 14 20">
          <path d="M1 1v15l3.500-3 2.500 6 2.500-1-2.500-6H12z" fill="#fff" stroke="#222" />
        </svg>
      </Pointer>
    </Window>
  );
}
